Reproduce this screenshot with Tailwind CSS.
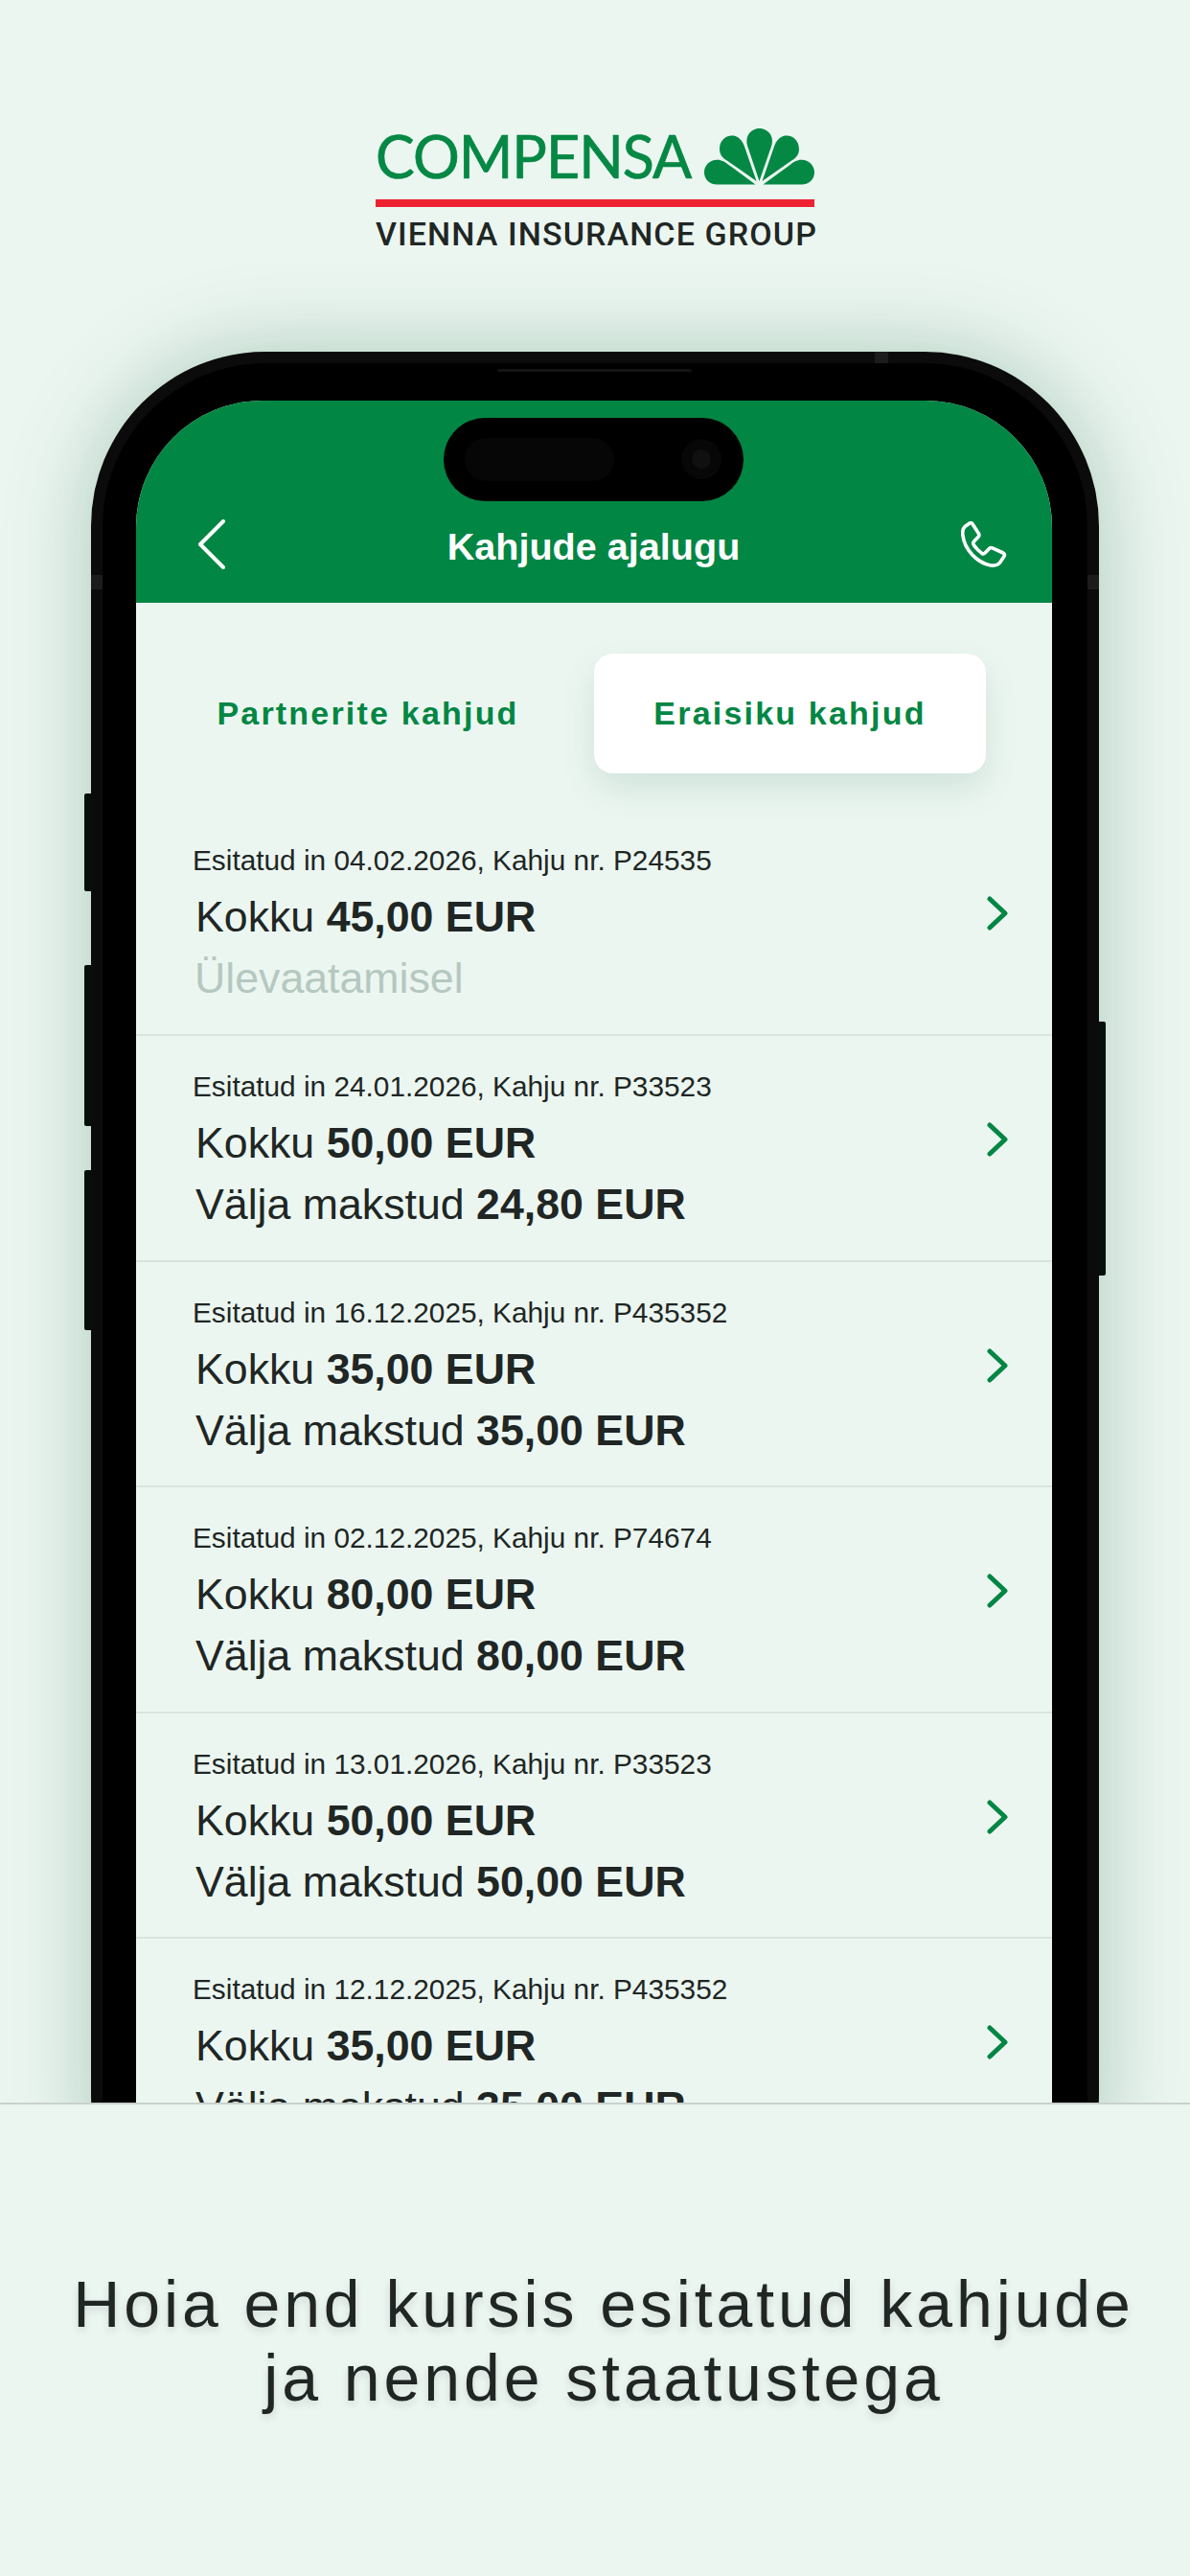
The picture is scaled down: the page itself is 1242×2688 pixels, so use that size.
<!DOCTYPE html>
<html>
<head>
    <title>Kahjude ajalugu</title>
    <script src="https://cdn.jsdelivr.net/npm/@tailwindcss/browser@4"></script>
</head>
<body class="bg-[#ecf6f1] font-['Liberation_Sans',Arial,sans-serif] text-[#202624]">
<div class="w-[1242px] h-[2688px] overflow-hidden flex flex-col">

    <div class="h-[2194px] shrink-0 overflow-hidden">
        <!-- Logo -->
        <div class="h-[367px] pl-[392px] pt-[133px]">
            <div class="w-[458px]">
                <div class="flex items-end justify-between h-[60px]">
                    <span class="font-['Lato',sans-serif] text-[61px] leading-[60px] tracking-[-1px] text-[#058844] [-webkit-text-stroke:0.7px_#058844] h-[60px] -mt-[1px]">COMPENSA</span>
                    <svg class="w-[115px] h-[60px] shrink-0" viewBox="1125 68 344 178" fill="#058844">
                        <path d="M1297 235 L1260 125 C1250 90 1275 70 1297 70 C1320 70 1345 90 1335 125 Z"/>
                        <path d="M1288 235 L1250 125 C1240 100 1225 93 1212 93 C1190 93 1173 110 1173 135 C1173 150 1180 160 1195 170 Z"/>
                        <path d="M1306 235 L1344 125 C1354 100 1369 93 1382 93 C1404 93 1421 110 1421 135 C1421 150 1414 160 1399 170 Z"/>
                        <path d="M1285 245 L1165 245 C1140 245 1125 228 1125 207 C1125 185 1143 168 1165 168 C1180 168 1190 175 1200 183 Z"/>
                        <path d="M1309 245 L1429 245 C1454 245 1469 228 1469 207 C1469 185 1451 168 1429 168 C1414 168 1404 175 1394 183 Z"/>
                    </svg>
                </div>
                <div class="h-[8px] mt-[15px] bg-[#ee2130]"></div>
                <div class="mt-[11px] font-['Roboto',sans-serif] font-medium text-[34px] leading-[34px] tracking-[1.1px] text-[#202624] whitespace-nowrap">VIENNA INSURANCE GROUP</div>
            </div>
        </div>

        <!-- Phone -->
        <div class="relative w-[1052px] ml-[95px]">
            <div class="absolute -left-[7px] top-[461px] w-[8px] h-[102px] bg-[#050505] rounded-l-[2px]"></div>
            <div class="absolute -left-[7px] top-[640px] w-[8px] h-[168px] bg-[#050505] rounded-l-[2px]"></div>
            <div class="absolute -left-[7px] top-[854px] w-[8px] h-[167px] bg-[#050505] rounded-l-[2px]"></div>
            <div class="absolute -right-[7px] top-[699px] w-[8px] h-[265px] bg-[#050505] rounded-r-[2px]"></div>

            <div class="relative h-[2000px] rounded-[182px] bg-[#0b0b0b] p-[12px] shadow-[0_0_90px_rgba(0,90,50,0.28)]">
                <div class="absolute left-[818px] top-0 w-[14px] h-[13px] bg-[#1c1c1c]"></div>
                <div class="absolute left-0 top-[233px] w-[12px] h-[15px] bg-[#1c1c1c]"></div>
                <div class="absolute right-0 top-[233px] w-[12px] h-[15px] bg-[#1c1c1c]"></div>
                <div class="relative h-full rounded-[170px] bg-black pl-[35px] pr-[37px] pt-[39px]">
                    <div class="absolute left-[412px] top-[6px] w-[203px] h-[3px] rounded-full bg-[#141414]"></div>

                    <div class="relative h-full rounded-[132px] overflow-hidden bg-[#ecf6f1]">
                        <!-- Header -->
                        <header class="relative h-[211px] bg-[#028643] text-white">
                            <div class="absolute left-[321px] top-[18px] w-[313px] h-[87px] rounded-full bg-black">
                                <div class="absolute left-[22px] top-[21px] w-[156px] h-[45px] rounded-full bg-[#060606]"></div>
                                <div class="absolute left-[248px] top-[22px] w-[42px] h-[42px] rounded-full bg-[#070707] flex items-center justify-center">
                                    <div class="w-[20px] h-[20px] rounded-full bg-[#101010]"></div>
                                </div>
                            </div>
                            <div class="flex items-center justify-between h-full pt-[125px] pb-[36px] pl-[64px] pr-[47px]">
                                <svg class="w-[30px] h-[52px]" viewBox="0 0 30 52" fill="none" stroke="currentColor" stroke-width="4" stroke-linecap="round" stroke-linejoin="round">
                                    <path d="M27 2 L3 26 L27 50"/>
                                </svg>
                                <h1 class="font-bold text-[39.6px] leading-[50px] mt-[3px]">Kahjude ajalugu</h1>
                                <svg class="w-[48px] h-[48px]" viewBox="0 0 48 48" fill="none" stroke="currentColor" stroke-width="3.6" stroke-linecap="round" stroke-linejoin="round">
                                    <path d="M4 5.5 L9 2 C10.2 1.2 11.4 1.6 12 2.7 L18.6 13 C19.2 14.3 19 15.2 18 16.3 L13.5 21 C12.4 22.2 12.4 23.3 13.2 24.5 C15.5 28 18.4 31 21.8 33.4 C23 34.2 24 34 25 33 L29.5 28.4 C30.5 27.4 31.5 27.2 32.8 27.8 L44 33 C45.5 33.8 45.8 35 45 36.4 L41 42.5 C38.5 46 35 46.5 31 46 C16 43 3.5 29 1.8 14 C1.4 10.5 2 7.5 4 5.5 Z"/>
                                </svg>
                            </div>
                        </header>

                        <!-- Tabs -->
                        <div class="flex items-start pt-[53px] pb-[38px] pl-[59px] pr-[69px] h-[216px]">
                            <div class="w-[366px] h-[125px] mr-[53px] flex items-center justify-center font-bold text-[34px] tracking-[2.2px] text-[#028643]">Partnerite kahjud</div>
                            <div class="flex-1 h-[125px] rounded-[20px] bg-white flex items-center justify-center font-bold text-[34px] tracking-[2.2px] text-[#028643] shadow-[0_16px_36px_rgba(0,100,60,0.12)]">Eraisiku kahjud</div>
                        </div>

                        <!-- Claims -->
                        <ul>
                            <li class="relative h-[236px] border-b-2 border-[#d9e4de] pl-[59px] pt-[33px]">
                                <p class="text-[29.8px] leading-[40px]">Esitatud in 04.02.2026, Kahju nr. P24535</p>
                                <p class="pl-[3px] mt-[14px] text-[44.7px] leading-[50px]">Kokku <b>45,00 EUR</b></p>
                                <p class="pl-[2px] mt-[14px] text-[44.7px] leading-[50px] text-[#b5c8c0]">Ülevaatamisel</p>
                                <svg class="absolute left-[888px] top-[90px] w-[22px] h-[36px]" viewBox="0 0 22 36" fill="none" stroke="#028643" stroke-width="5" stroke-linecap="round" stroke-linejoin="round"><path d="M3 3 L19 18 L3 33"/></svg>
                            </li>
                            <li class="relative h-[236px] border-b-2 border-[#d9e4de] pl-[59px] pt-[33px]">
                                <p class="text-[29.8px] leading-[40px]">Esitatud in 24.01.2026, Kahju nr. P33523</p>
                                <p class="pl-[3px] mt-[14px] text-[44.7px] leading-[50px]">Kokku <b>50,00 EUR</b></p>
                                <p class="pl-[3px] mt-[14px] text-[44.7px] leading-[50px]">Välja makstud <b>24,80 EUR</b></p>
                                <svg class="absolute left-[888px] top-[90px] w-[22px] h-[36px]" viewBox="0 0 22 36" fill="none" stroke="#028643" stroke-width="5" stroke-linecap="round" stroke-linejoin="round"><path d="M3 3 L19 18 L3 33"/></svg>
                            </li>
                            <li class="relative h-[235px] border-b-2 border-[#d9e4de] pl-[59px] pt-[33px]">
                                <p class="text-[29.8px] leading-[40px]">Esitatud in 16.12.2025, Kahju nr. P435352</p>
                                <p class="pl-[3px] mt-[14px] text-[44.7px] leading-[50px]">Kokku <b>35,00 EUR</b></p>
                                <p class="pl-[3px] mt-[14px] text-[44.7px] leading-[50px]">Välja makstud <b>35,00 EUR</b></p>
                                <svg class="absolute left-[888px] top-[90px] w-[22px] h-[36px]" viewBox="0 0 22 36" fill="none" stroke="#028643" stroke-width="5" stroke-linecap="round" stroke-linejoin="round"><path d="M3 3 L19 18 L3 33"/></svg>
                            </li>
                            <li class="relative h-[236px] border-b-2 border-[#d9e4de] pl-[59px] pt-[33px]">
                                <p class="text-[29.8px] leading-[40px]">Esitatud in 02.12.2025, Kahju nr. P74674</p>
                                <p class="pl-[3px] mt-[14px] text-[44.7px] leading-[50px]">Kokku <b>80,00 EUR</b></p>
                                <p class="pl-[3px] mt-[14px] text-[44.7px] leading-[50px]">Välja makstud <b>80,00 EUR</b></p>
                                <svg class="absolute left-[888px] top-[90px] w-[22px] h-[36px]" viewBox="0 0 22 36" fill="none" stroke="#028643" stroke-width="5" stroke-linecap="round" stroke-linejoin="round"><path d="M3 3 L19 18 L3 33"/></svg>
                            </li>
                            <li class="relative h-[235px] border-b-2 border-[#d9e4de] pl-[59px] pt-[33px]">
                                <p class="text-[29.8px] leading-[40px]">Esitatud in 13.01.2026, Kahju nr. P33523</p>
                                <p class="pl-[3px] mt-[14px] text-[44.7px] leading-[50px]">Kokku <b>50,00 EUR</b></p>
                                <p class="pl-[3px] mt-[14px] text-[44.7px] leading-[50px]">Välja makstud <b>50,00 EUR</b></p>
                                <svg class="absolute left-[888px] top-[90px] w-[22px] h-[36px]" viewBox="0 0 22 36" fill="none" stroke="#028643" stroke-width="5" stroke-linecap="round" stroke-linejoin="round"><path d="M3 3 L19 18 L3 33"/></svg>
                            </li>
                            <li class="relative h-[236px] pl-[59px] pt-[33px]">
                                <p class="text-[29.8px] leading-[40px]">Esitatud in 12.12.2025, Kahju nr. P435352</p>
                                <p class="pl-[3px] mt-[14px] text-[44.7px] leading-[50px]">Kokku <b>35,00 EUR</b></p>
                                <p class="pl-[3px] mt-[14px] text-[44.7px] leading-[50px]">Välja makstud <b>35,00 EUR</b></p>
                                <svg class="absolute left-[888px] top-[90px] w-[22px] h-[36px]" viewBox="0 0 22 36" fill="none" stroke="#028643" stroke-width="5" stroke-linecap="round" stroke-linejoin="round"><path d="M3 3 L19 18 L3 33"/></svg>
                            </li>
                        </ul>
                    </div>
                </div>
            </div>
        </div>
    </div>

    <!-- Caption -->
    <div class="flex-1 border-t-2 border-[#c9d1cd] bg-[#ecf6f1] pt-[170px] pl-[18px] text-center text-[68px] leading-[77px] tracking-[3.9px] [text-shadow:0_4px_8px_rgba(0,0,0,0.12)]">
        <p>Hoia end kursis esitatud kahjude</p>
        <p>ja nende staatustega</p>
    </div>
</div>
</body>
</html>
